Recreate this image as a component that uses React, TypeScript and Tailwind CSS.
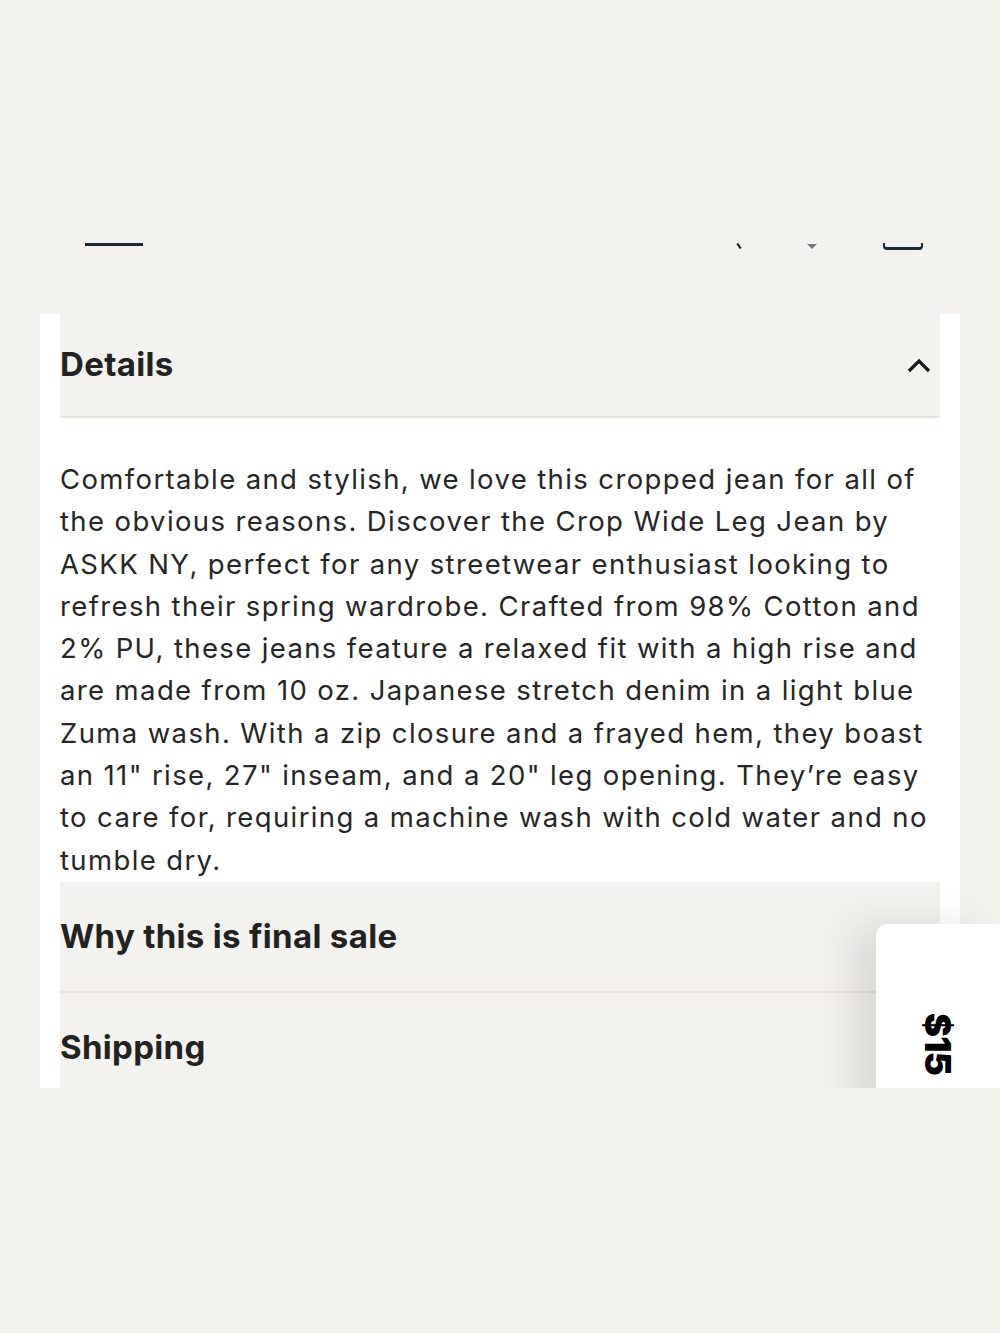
import React from "react";

const copy =
  "Comfortable and stylish, we love this cropped jean for all of the obvious reasons. Discover the Crop Wide Leg Jean by ASKK NY, perfect for any streetwear enthusiast looking to refresh their spring wardrobe. Crafted from 98% Cotton and 2% PU, these jeans feature a relaxed fit with a high rise and are made from 10 oz. Japanese stretch denim in a light blue Zuma wash. With a zip closure and a frayed hem, they boast an 11\" rise, 27\" inseam, and a 20\" leg opening. They’re easy to care for, requiring a machine wash with cold water and no tumble dry.";

const Section = ({ title, className = "" }: { title: string; className?: string }) => (
  <div className={`bg-[#f4f2ef] flex items-center border-b-2 border-[#e8e1de] ${className}`}>
    <h3 className="text-[33px] font-bold tracking-[0.01em] text-[#222]">{title}</h3>
  </div>
);

export default function App() {
  return (
    <div
      className="min-h-[1333px] w-[1000px] bg-[#f4f2ef] pt-[243px]"
      style={{ fontFamily: "Inter, 'Noto Sans', sans-serif" }}
    >
      <div className="relative h-[845px] overflow-hidden">
        {/* bottom edge of the header bar, cut off */}
        <div className="flex h-[7px] items-start pl-[85px] pr-[77px]">
          <div className="h-[3px] w-[58px] bg-[#1b2733]" />
          <div className="ml-auto h-[6px] w-[2px] rotate-[-35deg] bg-[#111]" />
          <div className="ml-[67px] mt-[1px] h-0 w-0 border-x-[5px] border-t-[5px] border-x-transparent border-t-[#777]" />
          <div className="ml-[66px] h-[7px] w-[40px] rounded-b-[4px] border-x-2 border-b-[3px] border-[#1b2733] bg-[#eef2f6]" />
        </div>

        <div className="mx-[40px] mt-[64px] bg-white px-[20px]">
          <div className="flex h-[104px] items-center justify-between border-b-2 border-[#e8e1de] bg-[#f4f2ef]">
            <h3 className="text-[33px] font-bold tracking-[0.01em] text-[#222]">Details</h3>
            <svg width="26" height="18" viewBox="0 0 26 18" className="mr-[8px]">
              <path d="M3 15 L13 5 L23 15" fill="none" stroke="#1a1a1a" strokeWidth="3.2" />
            </svg>
          </div>
          <p className="pt-[40px] pb-[1px] text-[27.5px] leading-[42.3px] tracking-[0.05em] text-[#262626]">{copy}</p>
          <Section title="Why this is final sale" className="h-[111px]" />
          <Section title="Shipping" className="h-[111px]" />
        </div>

        {/* price tab */}
        <div className="absolute right-0 top-[681px] flex h-[200px] w-[124px] justify-center rounded-tl-[12px] bg-white pt-[102px] shadow-[-24px_0_40px_rgba(0,0,0,0.1)]">
          <span className="rotate-90 self-start text-[36px] font-black leading-none tracking-[-0.02em] text-black">$15</span>
        </div>
      </div>
    </div>
  );
}
